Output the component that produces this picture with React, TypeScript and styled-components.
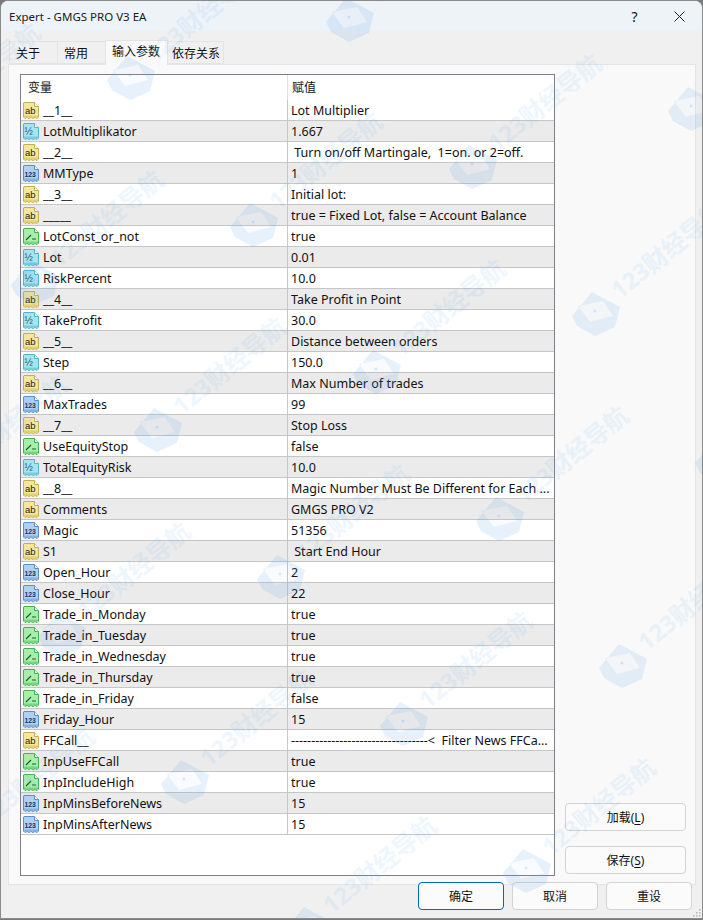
import styled, { createGlobalStyle } from "styled-components";

const GlobalStyle = createGlobalStyle`
  html, body {
    margin: 0;
    padding: 0;
    background: #7a7a7a;
    overflow: hidden;
  }
  * {
    box-sizing: border-box;
  }
`;

const FONT = `Tahoma, "Noto Sans", "Noto Sans CJK SC", sans-serif`;

const Window = styled.div`
  position: relative;
  width: 703px;
  height: 919px;
  display: flex;
  flex-direction: column;
  overflow: hidden;
  background: #f0f0f0;
  border: 1px solid #8a8a8a;
  border-radius: 8px 8px 0 0;
  font-family: ${FONT};
  font-size: 12px;
  color: #111;
`;

const TitleBar = styled.div`
  height: 30px;
  display: flex;
  align-items: center;
  flex-shrink: 0;
  padding: 0 0 0 8px;
  background: #eef3f8;
`;

const Title = styled.div`
  flex: 1;
  font-size: 11.5px;
  color: #1a1a1a;
`;

const CaptionButton = styled.div`
  width: 45px;
  display: flex;
  justify-content: center;
  align-items: center;
  font-size: 14px;
`;

const TabStrip = styled.div`
  height: 33px;
  display: flex;
  align-items: flex-end;
  flex-shrink: 0;
  padding-left: 9px;
`;

const Tab = styled.div<{ $width: number; $pad: number; $active?: boolean }>`
  width: ${(p) => p.$width}px;
  height: ${(p) => (p.$active ? 25 : 23)}px;
  padding-left: ${(p) => p.$pad}px;
  padding-top: ${(p) => (p.$active ? 3 : 4)}px;
  margin-bottom: ${(p) => (p.$active ? -1 : 0)}px;
  position: relative;
  background: ${(p) => (p.$active ? "#f9f9f9" : "#f0f0f0")};
  border: 1px solid #e4e4e4;
  border-bottom: ${(p) => (p.$active ? "none" : "1px solid #e4e4e4")};
  margin-left: -1px;
  line-height: 16px;
  white-space: nowrap;
`;

const Panel = styled.div`
  width: 688px;
  height: 821px;
  margin-left: 7px;
  flex-shrink: 0;
  display: flex;
  padding: 9px 9px 8px 11px;
  background: #f9f9f9;
  border: 1px solid #e4e4e4;
`;

const ParamTable = styled.div`
  width: 535px;
  display: flex;
  flex-direction: column;
  background: #fff;
  border: 1px solid #7f7f8c;
`;

const HeaderRow = styled.div`
  height: 25px;
  display: flex;
  flex-shrink: 0;
`;

const HeaderCell = styled.div<{ $first?: boolean }>`
  width: ${(p) => (p.$first ? "267px" : "auto")};
  flex: ${(p) => (p.$first ? "none" : 1)};
  padding: 5px 0 0 ${(p) => (p.$first ? 7 : 4)}px;
  border-right: ${(p) => (p.$first ? "1px solid #e0e0e0" : "none")};
  line-height: 16px;
`;

const Row = styled.div<{ $odd: boolean }>`
  height: 21px;
  display: flex;
  flex-shrink: 0;
  font-size: 12.5px;
  background: ${(p) => (p.$odd ? "#ebebeb" : "#fff")};
  border-bottom: 1px solid #c6c6c6;
`;

const NameCell = styled.div`
  width: 267px;
  display: flex;
  align-items: center;
  gap: 4px;
  padding-left: 2px;
  border-right: 1px solid #c6c6c6;
  white-space: pre;
`;

const ValueCell = styled.div`
  flex: 1;
  display: flex;
  align-items: center;
  padding-left: 3px;
  white-space: pre;
  overflow: hidden;
`;

const SideColumn = styled.div`
  width: 121px;
  margin-left: 10px;
  display: flex;
  flex-direction: column;
  justify-content: flex-end;
  gap: 15px;
  padding-bottom: 2px;
`;

const Button = styled.div<{ $width?: number; $primary?: boolean }>`
  width: ${(p) => (p.$width ? `${p.$width}px` : "100%")};
  height: 28px;
  display: flex;
  align-items: center;
  justify-content: center;
  background: #fbfbfb;
  border: 1px solid ${(p) => (p.$primary ? "#0067c0" : "#d3d3d3")};
  border-radius: 4px;
  white-space: nowrap;

  u {
    text-underline-offset: 2px;
  }
`;

const Footer = styled.div`
  position: relative;
  margin-top: -3px;
  display: flex;
  justify-content: flex-end;
  gap: 8px;
  padding-right: 10px;
`;

const Grip = styled.svg`
  position: absolute;
  right: 0;
  bottom: 0;
`;

const WatermarkLayer = styled.div`
  position: absolute;
  inset: 0;
  overflow: hidden;
  pointer-events: none;
`;

const Watermark = styled.div<{ $x: number; $y: number }>`
  position: absolute;
  left: ${(p) => p.$x}px;
  top: ${(p) => p.$y}px;
  width: 0;
  height: 0;
`;

const WatermarkLogo = styled.svg`
  position: absolute;
  left: -26px;
  top: -30px;
  filter: blur(0.5px);
`;

const WatermarkText = styled.div`
  position: absolute;
  left: 18px;
  top: -36px;
  font-family: "Noto Sans", "Noto Sans CJK SC", sans-serif;
  font-size: 24px;
  line-height: 30px;
  font-weight: 700;
  white-space: nowrap;
  color: rgba(90, 160, 235, 0.11);
  filter: blur(0.4px);
  transform: rotate(-39deg);
  transform-origin: 0 50%;
`;

type Kind = "ab" | "half" | "int" | "bool";

const KIND_COLORS: Record<Kind, { fill: string; edge: string; low: string }> = {
  ab: { fill: "#f4e69a", edge: "#c4ae56", low: "#e3d06c" },
  half: { fill: "#a6e3ee", edge: "#52b4cc", low: "#72cfe0" },
  int: { fill: "#aed0f3", edge: "#5b8fc9", low: "#83b2e4" },
  bool: { fill: "#a8eea8", edge: "#45b04f", low: "#72da7a" },
};

const TypeIcon = ({ kind }: { kind: Kind }) => {
  const c = KIND_COLORS[kind];
  return (
    <svg width="16" height="17" viewBox="0 0 16 17" style={{ flexShrink: 0 }}>
      <path
        d="M1 .5H11.5L15.5 4.5V15L14 16.5L12 15.5L10 16.5L8 15.5L6 16.5L4 15.5L2 16.5L.5 15V1Z"
        fill={c.fill}
        stroke={c.edge}
      />
      <path d="M11.5 .5V4.5H15.5" fill="#fff" stroke={c.edge} />
      <path d="M1 13.5H15V15L14 16L12 15L10 16L8 15L6 16L4 15L2 16L1 15Z" fill={c.low} />
      {kind === "ab" && (
        <text x="2" y="11.5" fontSize="9.5" fontFamily="Liberation Sans" fill="#222">
          ab
        </text>
      )}
      {kind === "half" && (
        <text x="1.5" y="11.5" fontSize="10" fontFamily="Liberation Sans" fill="#1b5a6b">
          ½
        </text>
      )}
      {kind === "int" && (
        <text x="1.5" y="11.5" fontSize="6.8" fontWeight="700" fontFamily="Liberation Sans" fill="#163560">
          123
        </text>
      )}
      {kind === "bool" && (
        <path d="M3 12L8 7M9 11H13" fill="none" stroke="#14622a" strokeWidth="1.2" />
      )}
    </svg>
  );
};

const PARAMS: [Kind, string, string][] = [
  ["ab", "__1__", "Lot Multiplier"],
  ["half", "LotMultiplikator", "1.667"],
  ["ab", "__2__", " Turn on/off Martingale,  1=on. or 2=off."],
  ["int", "MMType", "1"],
  ["ab", "__3__", "Initial lot:"],
  ["ab", "_____", "true = Fixed Lot, false = Account Balance"],
  ["bool", "LotConst_or_not", "true"],
  ["half", "Lot", "0.01"],
  ["half", "RiskPercent", "10.0"],
  ["ab", "__4__", "Take Profit in Point"],
  ["half", "TakeProfit", "30.0"],
  ["ab", "__5__", "Distance between orders"],
  ["half", "Step", "150.0"],
  ["ab", "__6__", "Max Number of trades"],
  ["int", "MaxTrades", "99"],
  ["ab", "__7__", "Stop Loss"],
  ["bool", "UseEquityStop", "false"],
  ["half", "TotalEquityRisk", "10.0"],
  ["ab", "__8__", "Magic Number Must Be Different for Each ..."],
  ["ab", "Comments", "GMGS PRO V2"],
  ["int", "Magic", "51356"],
  ["ab", "S1", " Start End Hour"],
  ["int", "Open_Hour", "2"],
  ["int", "Close_Hour", "22"],
  ["bool", "Trade_in_Monday", "true"],
  ["bool", "Trade_in_Tuesday", "true"],
  ["bool", "Trade_in_Wednesday", "true"],
  ["bool", "Trade_in_Thursday", "true"],
  ["bool", "Trade_in_Friday", "false"],
  ["int", "Friday_Hour", "15"],
  ["ab", "FFCall__", "----------------------------------<  Filter News FFCa..."],
  ["bool", "InpUseFFCall", "true"],
  ["bool", "InpIncludeHigh", "true"],
  ["int", "InpMinsBeforeNews", "15"],
  ["int", "InpMinsAfterNews", "15"],
];

// the watermark repeats on a skewed lattice
const WATERMARKS: { x: number; y: number }[] = [];
for (let i = -3; i < 5; i++) {
  for (let j = -3; j < 7; j++) {
    const x = 130 + i * 219 + j * 123;
    const y = 77 - i * 58 + j * 147;
    if (x > -150 && x < 740 && y > -30 && y < 960) WATERMARKS.push({ x, y });
  }
}

export default function App() {
  return (
    <>
      <GlobalStyle />
      <Window>
        <TitleBar>
          <Title>Expert - GMGS PRO V3 EA</Title>
          <CaptionButton>?</CaptionButton>
          <CaptionButton>
            <svg width="11" height="11" viewBox="0 0 11 11">
              <path d="M.5 .5L10.5 10.5M10.5 .5L.5 10.5" stroke="#222" fill="none" />
            </svg>
          </CaptionButton>
        </TitleBar>
        <TabStrip>
          <Tab $width={49} $pad={6}>
            关于
          </Tab>
          <Tab $width={49} $pad={6}>
            常用
          </Tab>
          <Tab $width={63} $pad={6} $active>
            输入参数
          </Tab>
          <Tab $width={57} $pad={4}>
            依存关系
          </Tab>
        </TabStrip>
        <Panel>
          <ParamTable>
            <HeaderRow>
              <HeaderCell $first>变量</HeaderCell>
              <HeaderCell>赋值</HeaderCell>
            </HeaderRow>
            {PARAMS.map(([kind, name, value], i) => (
              <Row key={i} $odd={i % 2 === 1}>
                <NameCell>
                  <TypeIcon kind={kind} />
                  {name}
                </NameCell>
                <ValueCell>{value}</ValueCell>
              </Row>
            ))}
          </ParamTable>
          <SideColumn>
            <Button>
              加载(<u>L</u>)
            </Button>
            <Button>
              保存(<u>S</u>)
            </Button>
          </SideColumn>
        </Panel>
        <Footer>
          <Button $width={86} $primary>
            确定
          </Button>
          <Button $width={86}>取消</Button>
          <Button $width={86}>重设</Button>
        </Footer>
        <Grip width="10" height="10" viewBox="0 0 10 10">
          <path d="M7 1h1.5v1.5H7zM4 4h1.5v1.5H4zM7 4h1.5v1.5H7zM1 7h1.5v1.5H1zM4 7h1.5v1.5H4zM7 7h1.5v1.5H7z" fill="#b5b5b5" />
        </Grip>
        <WatermarkLayer>
          {WATERMARKS.map((w) => (
            <Watermark key={`${w.x}-${w.y}`} $x={w.x} $y={w.y}>
              <WatermarkLogo width="70" height="60" viewBox="0 0 70 60">
                <path
                  fillRule="evenodd"
                  d="M2 32L22 8L50 23L45 43L25 52L7 42ZM8 22L33 17L43 32L20 38Z"
                  fill="rgba(90,160,235,0.15)"
                />
                <path d="M8 22L33 17L43 32L20 38Z" fill="rgba(90,160,235,0.04)" />
                <circle cx="25" cy="27" r="1.6" fill="rgba(90,160,235,0.2)" />
              </WatermarkLogo>
              <WatermarkText>123财经导航</WatermarkText>
            </Watermark>
          ))}
        </WatermarkLayer>
      </Window>
    </>
  );
}
